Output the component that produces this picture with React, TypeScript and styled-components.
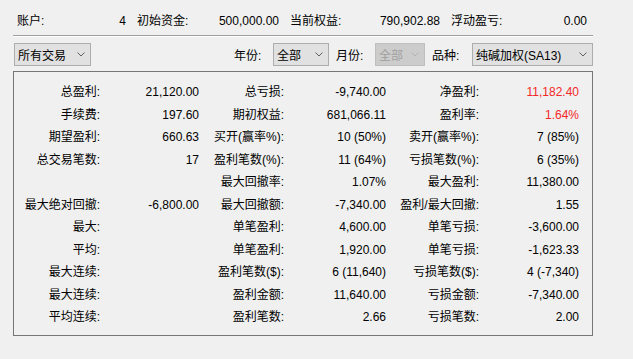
import React from "react";
import styled, { createGlobalStyle } from "styled-components";

const GlobalStyle = createGlobalStyle`
    html, body {
        margin: 0;
        padding: 0;
        background: #f0f0f0;
    }
    body {
        font-family: "Liberation Sans", "Noto Sans CJK SC", sans-serif;
        font-size: 12px;
        color: #000;
    }
`

const Page = styled.div`
    width: 633px;
    height: 359px;
    background: #f0f0f0;
    overflow: hidden;
`

const Summary = styled.div`
    display: grid;
    grid-template-columns: 109px 142px 150px 136px;
    column-gap: 11px;
    padding: 13px 0 0 17px;
    height: 16px;
    line-height: 16px;
`

const SummaryCell = styled.div`
    display: flex;
    justify-content: space-between;
    white-space: nowrap;
`

const Separator = styled.div`
    margin: 6px 40px 0 13px;
    height: 1px;
    background: #a0a0a0;
    border-bottom: 1px solid #ffffff;
`

const Toolbar = styled.div`
    display: flex;
    align-items: center;
    padding: 0 40px 0 14px;
    margin-top: 6px;
    height: 23px;
`

const Spacer = styled.div`
    flex: 1;
`

const FieldLabel = styled.span<{ $width: number }>`
    width: ${p => p.$width}px;
    margin-left: 7px;
    white-space: nowrap;
`

const Combo = styled.div<{ $width: number; $disabled?: boolean }>`
    box-sizing: border-box;
    width: ${p => p.$width}px;
    height: 23px;
    display: flex;
    align-items: center;
    justify-content: space-between;
    padding: 0 5px 0 3px;
    background: ${p => (p.$disabled ? "#cccccc" : "#e1e1e1")};
    border: 1px solid ${p => (p.$disabled ? "#bfbfbf" : "#adadad")};
    color: ${p => (p.$disabled ? "#a0a0a0" : "#000")};
    white-space: nowrap;

    svg polyline {
        stroke: ${p => (p.$disabled ? "#b4b4b4" : "#606060")};
    }
`

const Panel = styled.div`
    box-sizing: border-box;
    margin: 5px 40px 0 13px;
    height: 265px;
    border: 1px solid #767676;
    padding-top: 9px;
`

const StatsGrid = styled.div`
    display: grid;
    grid-template-columns: 86px 99px 85px 102px 93px 100px;
    grid-auto-rows: 22.5px;
    align-items: center;
`

const Cell = styled.div<{ $red?: boolean }>`
    text-align: right;
    white-space: nowrap;
    line-height: 16px;
    color: ${p => (p.$red ? "#f42828" : "#000")};
`

const Chevron = () => (
    <svg width="8" height="5" viewBox="0 0 8 5">
        <polyline points="0.5,0.5 4,4 7.5,0.5" fill="none" strokeWidth="1" />
    </svg>
)

interface Stat {
    label: string;
    value: string;
    red?: boolean;
}

const summary: Stat[] = [
    { label: "账户:", value: "4" },
    { label: "初始资金:", value: "500,000.00" },
    { label: "当前权益:", value: "790,902.88" },
    { label: "浮动盈亏:", value: "0.00" },
]

const rows: Stat[][] = [
    [{ label: "总盈利:", value: "21,120.00" }, { label: "总亏损:", value: "-9,740.00" }, { label: "净盈利:", value: "11,182.40", red: true }],
    [{ label: "手续费:", value: "197.60" }, { label: "期初权益:", value: "681,066.11" }, { label: "盈利率:", value: "1.64%", red: true }],
    [{ label: "期望盈利:", value: "660.63" }, { label: "买开(赢率%):", value: "10 (50%)" }, { label: "卖开(赢率%):", value: "7 (85%)" }],
    [{ label: "总交易笔数:", value: "17" }, { label: "盈利笔数(%):", value: "11 (64%)" }, { label: "亏损笔数(%):", value: "6 (35%)" }],
    [{ label: "", value: "" }, { label: "最大回撤率:", value: "1.07%" }, { label: "最大盈利:", value: "11,380.00" }],
    [{ label: "最大绝对回撤:", value: "-6,800.00" }, { label: "最大回撤额:", value: "-7,340.00" }, { label: "盈利/最大回撤:", value: "1.55" }],
    [{ label: "最大:", value: "" }, { label: "单笔盈利:", value: "4,600.00" }, { label: "单笔亏损:", value: "-3,600.00" }],
    [{ label: "平均:", value: "" }, { label: "单笔盈利:", value: "1,920.00" }, { label: "单笔亏损:", value: "-1,623.33" }],
    [{ label: "最大连续:", value: "" }, { label: "盈利笔数($):", value: "6 (11,640)" }, { label: "亏损笔数($):", value: "4 (-7,340)" }],
    [{ label: "最大连续:", value: "" }, { label: "盈利金额:", value: "11,640.00" }, { label: "亏损金额:", value: "-7,340.00" }],
    [{ label: "平均连续:", value: "" }, { label: "盈利笔数:", value: "2.66" }, { label: "亏损笔数:", value: "2.00" }],
]

const App = () => {
    return (
        <Page>
            <GlobalStyle />
            <Summary>
                {summary.map(s => (
                    <SummaryCell key={s.label}>
                        <span>{s.label}</span>
                        <span>{s.value}</span>
                    </SummaryCell>
                ))}
            </Summary>
            <Separator />
            <Toolbar>
                <Combo $width={77}>
                    <span>所有交易</span>
                    <Chevron />
                </Combo>
                <Spacer />
                <FieldLabel $width={39}>年份:</FieldLabel>
                <Combo $width={56}>
                    <span>全部</span>
                    <Chevron />
                </Combo>
                <FieldLabel $width={39}>月份:</FieldLabel>
                <Combo $width={50} $disabled>
                    <span>全部</span>
                    <Chevron />
                </Combo>
                <FieldLabel $width={40}>品种:</FieldLabel>
                <Combo $width={121}>
                    <span>纯碱加权(SA13)</span>
                    <Chevron />
                </Combo>
            </Toolbar>
            <Panel>
                <StatsGrid>
                    {rows.map((row, i) =>
                        row.map((s, j) => (
                            <React.Fragment key={`${i}-${j}`}>
                                <Cell>{s.label}</Cell>
                                <Cell $red={s.red}>{s.value}</Cell>
                            </React.Fragment>
                        ))
                    )}
                </StatsGrid>
            </Panel>
        </Page>
    )
};

export default App;
